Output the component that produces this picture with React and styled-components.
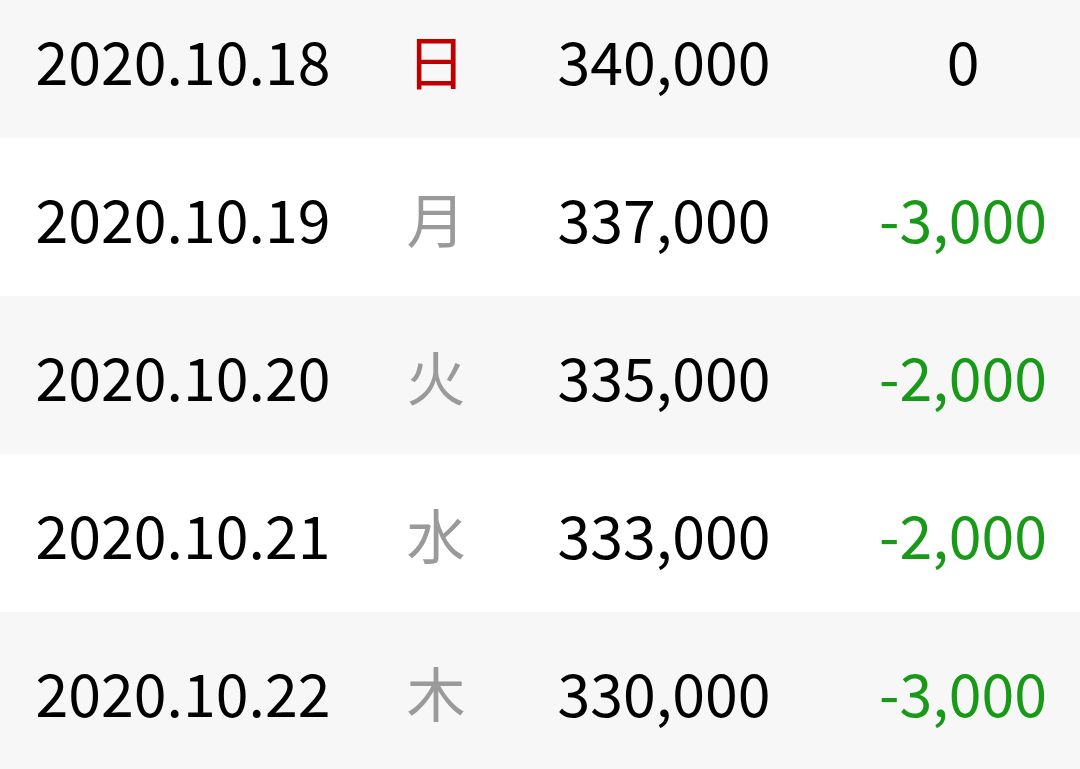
import React from "react";
import styled, { createGlobalStyle } from "styled-components";

const GlobalStyle = createGlobalStyle`
  html, body {
    margin: 0;
    padding: 0;
    background: #ffffff;
    overflow: hidden;
  }
  body {
    font-family: "Noto Sans CJK JP", "Noto Sans", sans-serif;
  }
`;

const List = styled.div`
  width: 1080px;
  margin-top: -20px;
`;

const Row = styled.div`
  display: grid;
  grid-template-columns: 366px 140px 316px 258px;
  align-items: center;
  height: 158px;
  background: ${(p) => (p.$shaded ? "#f7f7f7" : "#ffffff")};
  font-size: 59px;
  line-height: 1;
  color: #000000;
`;

const Cell = styled.div`
  text-align: center;
  padding-top: 0;
  padding-left: ${(p) => p.$indent || 0}px;
  color: ${(p) => p.$color || "inherit"};
  white-space: nowrap;
`;

const rows = [
  { date: "2020.10.18", day: "日", value: "340,000", diff: "0" },
  { date: "2020.10.19", day: "月", value: "337,000", diff: "-3,000" },
  { date: "2020.10.20", day: "火", value: "335,000", diff: "-2,000" },
  { date: "2020.10.21", day: "水", value: "333,000", diff: "-2,000" },
  { date: "2020.10.22", day: "木", value: "330,000", diff: "-3,000" },
];

export default function App() {
  return (
    <>
      <GlobalStyle />
      <List>
        {rows.map((r, i) => (
          <Row key={r.date} $shaded={i % 2 === 0}>
            <Cell>{r.date}</Cell>
            <Cell $color={r.day === "日" ? "#c00000" : "#9a9a9a"}>{r.day}</Cell>
            <Cell>{r.value}</Cell>
            <Cell $indent={24} $color={r.diff.startsWith("-") ? "#189a18" : "#000000"}>
              {r.diff}
            </Cell>
          </Row>
        ))}
      </List>
    </>
  );
}
